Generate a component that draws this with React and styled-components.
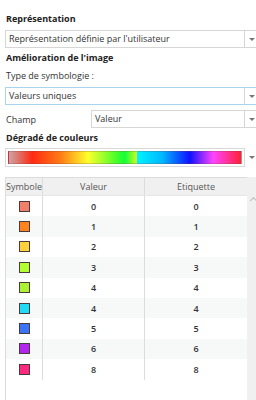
import React from 'react';
import styled, { createGlobalStyle } from 'styled-components';

const GlobalStyle = createGlobalStyle`
  html, body {
    margin: 0;
    padding: 0;
    background: #ffffff;
    overflow: hidden;
  }
  body {
    font-family: "Open Sans", "Noto Sans", Arial, sans-serif;
    color: #333;
  }
`;

const Panel = styled.div`
  width: 254px;
  padding: 13px 0 0 5px;
  font-size: 9px;
`;

const SectionTitle = styled.div`
  font-weight: bold;
  color: #222;
  font-size: 9px;
  height: 12px;
  line-height: 12px;
  padding-left: 1px;
  margin-bottom: ${p => p.gap || 5}px;
`;

const Text = styled.div`
  height: 12px;
  line-height: 12px;
  padding-left: 1px;
  margin-bottom: 5px;
  color: #333;
`;

const SelectBox = styled.div`
  display: flex;
  align-items: stretch;
  height: 18px;
  box-sizing: border-box;
  border: 1px solid ${p => (p.focused ? '#a9d3ee' : '#d6d6d6')};
  background: #fff;
  flex: 1;
  margin-bottom: ${p => p.gap || 0}px;
`;

const SelectValue = styled.div`
  flex: 1;
  padding-left: 3px;
  line-height: 16px;
  color: #333;
  white-space: nowrap;
  overflow: hidden;
`;

const ArrowCell = styled.div`
  width: 13px;
  border-left: 1px solid #d6d6d6;
  display: flex;
  align-items: center;
  justify-content: center;
`;

const Arrow = styled.div`
  width: 0;
  height: 0;
  border-left: 3px solid transparent;
  border-right: 3px solid transparent;
  border-top: 3px solid #777;
`;

const FieldRow = styled.div`
  display: flex;
  align-items: center;
  margin: 5px 0 4px;
`;

const FieldLabel = styled.div`
  width: 85px;
  padding-left: 1px;
  color: #333;
`;

const RampRow = styled.div`
  display: flex;
  height: 19px;
  margin-bottom: 10px;
`;

const RampBox = styled.div`
  width: 240px;
  box-sizing: border-box;
  border: 1px solid #d9d9d9;
  padding: 2px;
  background: #fff;
`;

const Ramp = styled.div`
  height: 100%;
  box-sizing: border-box;
  border: 1px solid rgba(120, 60, 60, 0.25);
  background: linear-gradient(
    to right,
    #c9a6a6 0%,
    #ff2a12 10%,
    #ff7a14 22%,
    #ffff2c 34%,
    #3cff2a 47%,
    #14ff3c 50%,
    #c8ff1e 55%,
    #00f4ff 55.2%,
    #00b8ff 66%,
    #1010ff 78%,
    #ff44ff 88%,
    #ff2236 100%
  );
`;

const RampArrow = styled.div`
  width: 14px;
  display: flex;
  align-items: center;
  justify-content: center;
`;

const Table = styled.div`
  display: flex;
  height: 232px;
  border-left: 1px solid #dcdcdc;
`;

const Grid = styled.div`
  width: 241px;
`;

const Header = styled.div`
  display: grid;
  grid-template-columns: 37px 102px 102px;
  height: 19px;
  background: #f0f0f0;
  border-top: 1px solid #dcdcdc;
  border-bottom: 1px solid #e6e6e6;
  box-sizing: border-box;
`;

const HeadCell = styled.div`
  display: flex;
  align-items: center;
  justify-content: center;
  color: #555;
  border-right: 1px solid #dcdcdc;
  &:last-child {
    border-right: none;
  }
`;

const Row = styled.div`
  display: grid;
  grid-template-columns: 37px 102px 102px;
  height: 20.4px;
  background: ${p => (p.odd ? '#f7f8f8' : '#ffffff')};
`;

const Cell = styled.div`
  display: flex;
  align-items: center;
  justify-content: center;
  color: #333;
  font-weight: 600;
  border-right: ${p => (p.line ? '1px solid #dcdcdc' : 'none')};
`;

const Swatch = styled.div`
  width: 11px;
  height: 11px;
  box-sizing: border-box;
  border: 1px solid #4a3a3a;
  background: ${p => p.color};
`;

const Scroll = styled.div`
  width: 13px;
  background: #f0f0f0;
  display: flex;
  justify-content: center;
  padding-top: 21px;
  box-sizing: border-box;
`;

const ScrollArrow = styled.div`
  width: 4px;
  height: 4px;
  border-left: 1px solid #bbb;
  border-top: 1px solid #bbb;
  transform: rotate(45deg);
`;

const rows = [
  { color: '#f0806a', v: '0' },
  { color: '#ff8420', v: '1' },
  { color: '#ffd23c', v: '2' },
  { color: '#b2ff30', v: '3' },
  { color: '#aaf232', v: '4' },
  { color: '#20daf8', v: '4' },
  { color: '#3a72f8', v: '5' },
  { color: '#b424f0', v: '6' },
  { color: '#ff2880', v: '8' },
];

export default function App() {
  return (
    <>
      <GlobalStyle />
      <Panel>
        <SectionTitle>Représentation</SectionTitle>
        <SelectBox gap={4}>
          <SelectValue>Représentation définie par l'utilisateur</SelectValue>
          <ArrowCell><Arrow /></ArrowCell>
        </SelectBox>
        <SectionTitle gap={6}>Amélioration de l'image</SectionTitle>
        <Text>Type de symbologie :</Text>
        <SelectBox focused>
          <SelectValue>Valeurs uniques</SelectValue>
          <ArrowCell><Arrow /></ArrowCell>
        </SelectBox>
        <FieldRow>
          <FieldLabel>Champ</FieldLabel>
          <SelectBox>
            <SelectValue>Valeur</SelectValue>
            <ArrowCell><Arrow /></ArrowCell>
          </SelectBox>
        </FieldRow>
        <SectionTitle gap={4}>Dégradé de couleurs</SectionTitle>
        <RampRow>
          <RampBox><Ramp /></RampBox>
          <RampArrow><Arrow /></RampArrow>
        </RampRow>
        <Table>
          <Grid>
            <Header>
              <HeadCell>Symbole</HeadCell>
              <HeadCell>Valeur</HeadCell>
              <HeadCell>Etiquette</HeadCell>
            </Header>
            {rows.map((r, i) => (
              <Row key={i} odd={i % 2 === 1}>
                <Cell line><Swatch color={r.color} /></Cell>
                <Cell line>{r.v}</Cell>
                <Cell>{r.v}</Cell>
              </Row>
            ))}
          </Grid>
          <Scroll><ScrollArrow /></Scroll>
        </Table>
      </Panel>
    </>
  );
}
